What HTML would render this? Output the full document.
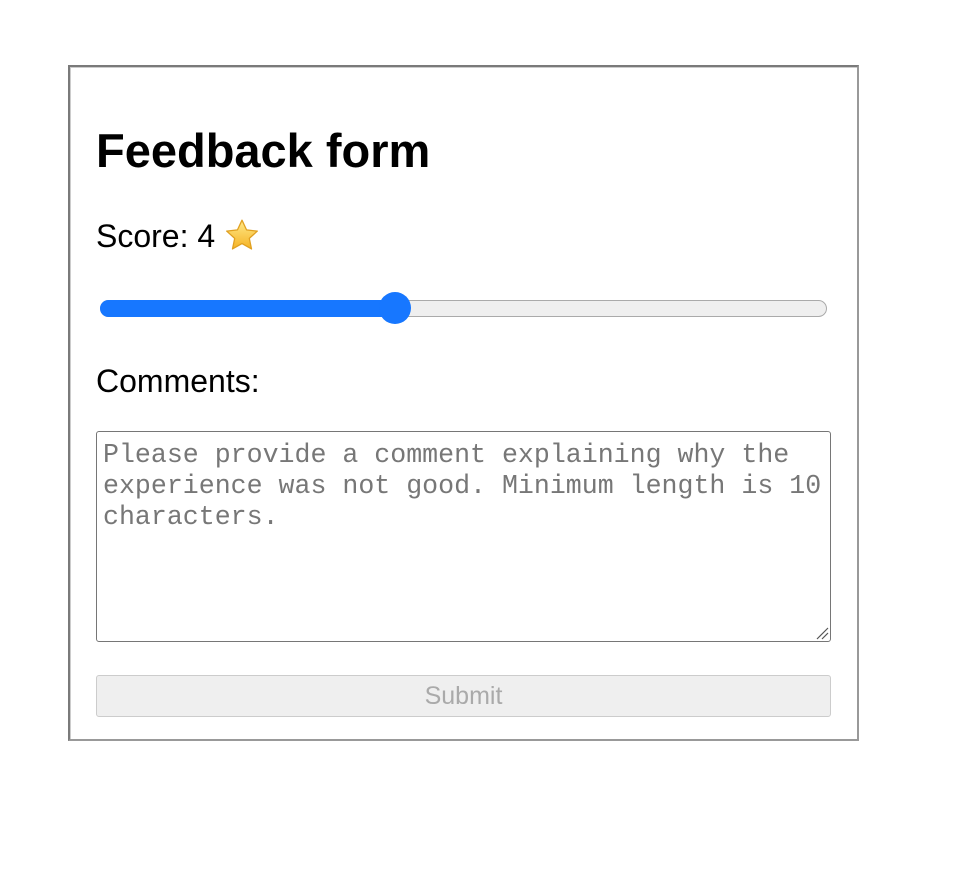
<!DOCTYPE html>
<html><head><meta charset="utf-8"><style>
html,body{margin:0;padding:0;background:#fff;width:962px;height:876px;overflow:hidden;font-family:"Liberation Sans",sans-serif}
.card{position:absolute;left:68px;top:65px;width:787px;height:672px;border:2px solid #7a7a7a;border-right-color:#999;border-bottom-color:#999;box-shadow:inset 1px 1px 0 #ccc}
.h{position:absolute;left:96px;top:123px;font-size:47px;font-weight:bold;line-height:56px;color:#000}
.s{position:absolute;left:96px;top:216px;font-size:32px;line-height:40px;color:#000}
.c{position:absolute;left:96px;top:361px;font-size:32px;line-height:40px;color:#000}
.track{position:absolute;left:100px;top:300px;width:725px;height:15px;border:1px solid #aaa;border-radius:9px;background:#efefef}
.fill{position:absolute;left:100px;top:300px;width:300px;height:17px;border-radius:9px;background:#1777ff}
.thumb{position:absolute;left:379px;top:292px;width:32px;height:32px;border-radius:50%;background:#1777ff}
.ta{position:absolute;left:96px;top:431px;width:733px;height:209px;border:1px solid #767676;border-radius:3px}
.ph{position:absolute;left:103px;top:440px;font-family:"Liberation Mono",monospace;font-size:26.6px;line-height:31px;color:#777;white-space:pre}
.btn{position:absolute;left:96px;top:675px;width:733px;height:40px;border:1px solid #ccc;border-radius:3px;background:#efefef;color:#aaa;font-size:25px;line-height:40px;text-align:center}
</style></head><body>
<div class="card"></div>
<div class="h">Feedback form</div>
<div class="s">Score: 4 <svg width="36" height="34" viewBox="0 0 34 32" style="vertical-align:-5px"><defs><linearGradient id="g" x1="0" y1="0" x2="0" y2="1"><stop offset="0" stop-color="#ffe98a"/><stop offset="1" stop-color="#f5b324"/></linearGradient></defs><path d="M17 2 L21.3 11.2 L31.5 12.3 L23.9 19.2 L26 29.2 L17 24.1 L8 29.2 L10.1 19.2 L2.5 12.3 L12.7 11.2 Z" fill="url(#g)" stroke="#e0a020" stroke-width="1.2" stroke-linejoin="round"/></svg></div>
<div class="track"></div>
<div class="fill"></div>
<div class="thumb"></div>
<div class="c">Comments:</div>
<div class="ta"><svg style="position:absolute;right:1px;bottom:1px" width="14" height="14"><path d="M2 13 L13 2 M7 13 L13 7" stroke="#555" stroke-width="1.2"/></svg></div>
<div class="ph">Please provide a comment explaining why the
experience was not good. Minimum length is 10
characters.</div>
<div class="btn">Submit</div>
</body></html>
